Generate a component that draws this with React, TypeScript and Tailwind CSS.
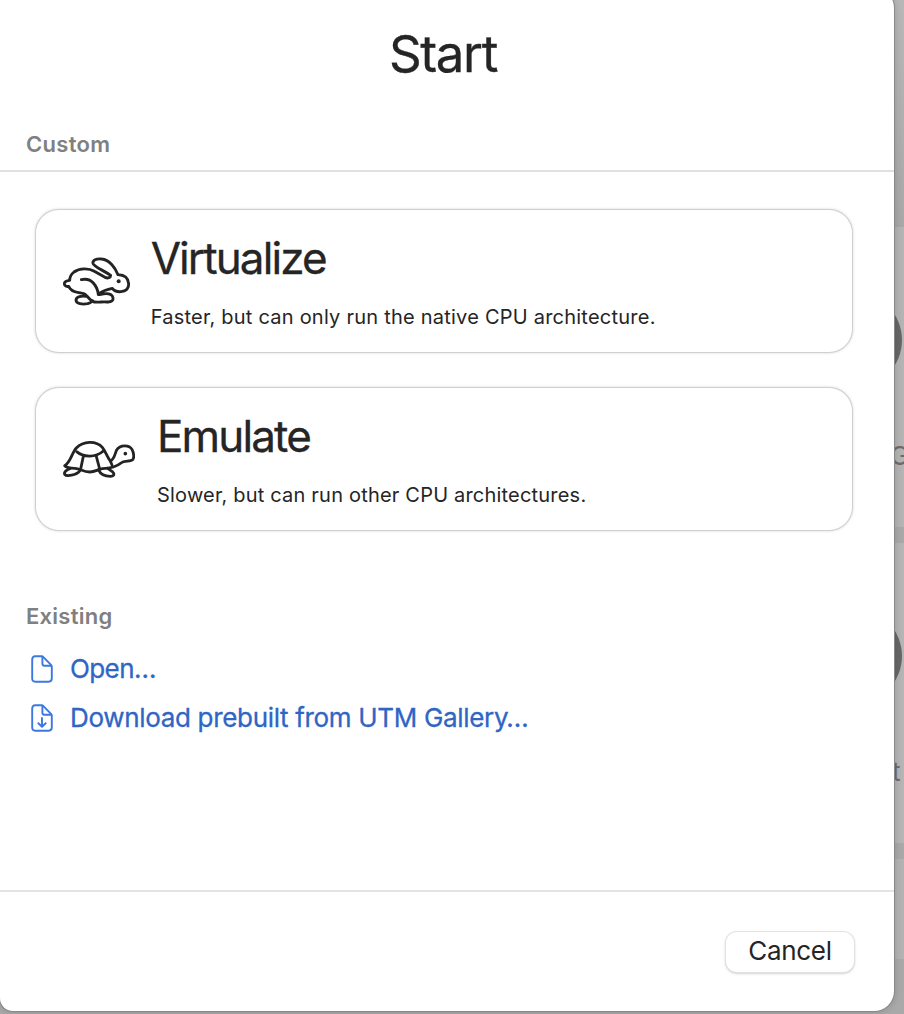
import type { ReactNode } from 'react';

function Rabbit() {
  return (
    <svg
      viewBox="36 30 206 150"
      className="h-[50px] w-[68.67px] shrink-0"
      fill="none"
      stroke="#232323"
      strokeWidth="8.6"
      strokeLinecap="round"
      strokeLinejoin="round"
    >
      <path d="M147 143C158 135 172 130 187 127C192 134 202 138 213 137C229 136 237 127 236 113C235 97 226 87 204 86C196 66 178 41 155 39C139 37 127 43 129 52C132 63 159 72 182 88C182 95 174 98 165 94L133 76C117 66 88 66 72 78C62 86 59 94 59 103C50 104 42 108 43 114C44 121 51 122 56 121C60 132 72 138 86 140C98 142 104 142 109 148C117 157 124 167 133 168C149 170 157 166 171 168C185 169 191 163 189 155C187 145 177 143 168 143C159 143 153 145 145 146C144 135 138 120 130 111C121 101 107 98 94 101" />
      <path d="M109 151C94 149 79 151 78 162C78 174 98 176 113 173C120 171 125 167 128 164" />
      <circle cx="206" cy="106" r="6" fill="#232323" stroke="none" />
    </svg>
  );
}

function Turtle() {
  return (
    <svg
      viewBox="36 42 222 118"
      className="h-[39.33px] w-[74px] shrink-0"
      fill="none"
      stroke="#232323"
      strokeWidth="8.4"
      strokeLinecap="round"
      strokeLinejoin="round"
    >
      <path d="M44 122C62 112 65 84 79 69C99 47 139 46 157 67C167 80 173 99 181 108C194 103 195 84 200 75C210 58 238 59 246 73C251 82 253 97 249 103C243 111 223 106 213 114C199 126 180 130 157 131C146 132 135 141 119 141C99 141 91 131 75 130C60 129 49 127 44 122Z" />
      <path d="M80 80C100 98 138 98 159 79M100 94L92 132M139 94L149 132M181 108L186 120" />
      <path d="M61 130C50 134 41 142 44 148C49 155 79 152 90 137M145 134C151 147 166 154 181 154C193 154 195 147 187 140L173 130" />
      <circle cx="226" cy="86" r="5.5" fill="#232323" stroke="none" />
    </svg>
  );
}

function DocIcon({ download = false }: { download?: boolean }) {
  return (
    <svg viewBox="0 0 22 28" className="h-7 w-[22px] shrink-0" fill="none" stroke="#3b78df" strokeWidth="1.9" strokeLinecap="round" strokeLinejoin="round">
      <path d="M4.2 1.3H10.5Q11.6 1.3 12.4 2.1L20 9.8Q20.8 10.6 20.8 11.7V23.6Q20.8 26.7 17.8 26.7H4.2Q1.2 26.7 1.2 23.6V4.4Q1.2 1.3 4.2 1.3Z" />
      <path d="M11.4 1.8V8.7Q11.4 10.7 13.4 10.7H20.3" />
      {download && <path d="M11 14V22.5M7.3 19.2L11 22.8L14.7 19.2" />}
    </svg>
  );
}

function Option({ icon, title, note, titleClass, noteClass }: { icon: ReactNode; title: string; note: string; titleClass: string; noteClass: string }) {
  return (
    <button className="flex h-[142px] w-[816px] items-center rounded-[23px] bg-white pl-[26px] text-left shadow-[0_0_0_1px_#d0d0d0,0_0_3px_1px_rgba(0,0,0,0.16)]">
      {icon}
      <span className="flex flex-col whitespace-nowrap">
        <span className={titleClass}>{title}</span>
        <span className={noteClass}>{note}</span>
      </span>
    </button>
  );
}

function Backdrop() {
  return (
    <div className="absolute inset-0 flex flex-col items-end bg-[#a9a9a9] text-[26px] text-[#6c6c6c]">
      <div className="h-[227px] w-full bg-gradient-to-b from-[#b8b8b8] to-[#a8a8a8]" />
      <div className="relative h-[300px] w-full bg-[#b4b4b4]">
        <div className="absolute top-[65px] right-[2px] size-24 rounded-full bg-[#676767]" />
        <span className="absolute top-[209px] left-[890px]">G</span>
      </div>
      <div className="relative mt-4 h-[300px] w-full bg-[#b5b5b5]">
        <div className="absolute top-[65px] right-[2px] size-24 rounded-full bg-[#676767]" />
        <span className="absolute top-[209px] left-[892px]">t</span>
      </div>
      <div className="mt-4 h-[100px] w-full bg-[#b3b3b3]" />
    </div>
  );
}

export default function App() {
  return (
    <div className="relative h-[1014px] w-[904px] overflow-hidden font-['Inter',sans-serif] text-[#252525]">
      <Backdrop />
      <main className="relative -mt-3 flex h-[1023px] w-[894px] flex-col rounded-[20px] rounded-tl-none rounded-bl-[13px] bg-white shadow-[0_0_0_1px_#888,0_0_8px_rgba(0,0,0,0.2)]">
        <h1 className="mt-[34px] h-[64px] pr-[8px] text-center text-[51px] leading-[64px] tracking-[-1.4px] [-webkit-text-stroke:0.3px_#252525]">Start</h1>
        <h2 className="mt-[44px] h-[28px] pl-[26px] text-[22px] leading-[28px] font-semibold tracking-[0.3px] text-[#808080]">Custom</h2>
        <div className="mt-[12px] h-[2px] bg-[#e0e0e0]" />
        <div className="mt-[38px] flex flex-col gap-9 pl-9">
          <Option
            icon={<Rabbit />}
            title="Virtualize"
            note="Faster, but can only run the native CPU architecture."
            titleClass="ml-[20px] -mt-px text-[44px] leading-[54px] tracking-[-1.9px] [-webkit-text-stroke:0.3px_#252525]"
            noteClass="mt-[19px] ml-[20px] text-[20px] leading-[26px] tracking-[0.23px]"
          />
          <Option
            icon={<Turtle />}
            title="Emulate"
            note="Slower, but can run other CPU architectures."
            titleClass="ml-[21px] -mt-px text-[44px] leading-[54px] tracking-[-1.85px] [-webkit-text-stroke:0.3px_#252525]"
            noteClass="mt-[19px] ml-[21px] text-[20px] leading-[26px] tracking-[0.2px]"
          />
        </div>
        <h2 className="mt-[72px] h-[28px] pl-[26px] text-[22px] leading-[28px] font-semibold tracking-[0.25px] text-[#808080]">Existing</h2>
        <nav className="mt-[21px] flex flex-col gap-[13px] pl-[31px] text-[26px] leading-9 text-[#2f65c5] [-webkit-text-stroke:0.3px_#2f65c5]">
          <a className="flex h-9 items-center gap-[17px]"><DocIcon /><span className="tracking-[-0.6px]">Open…</span></a>
          <a className="flex h-9 items-center gap-[17px]"><DocIcon download /><span className="tracking-[-0.32px]">Download prebuilt from UTM Gallery…</span></a>
        </nav>
        <div className="mt-auto h-[2px] shrink-0 bg-[#e4e4e4]" />
        <footer className="flex h-[119px] shrink-0 justify-end pt-[40px] pr-[40px]">
          <button className="h-10 w-[128px] rounded-[11px] bg-white pb-[2px] text-[26px] leading-[38px] tracking-[-0.3px] shadow-[0_0_0_1px_#e2e2e2,0_1px_3px_rgba(0,0,0,0.35)]">Cancel</button>
        </footer>
      </main>
    </div>
  );
}
